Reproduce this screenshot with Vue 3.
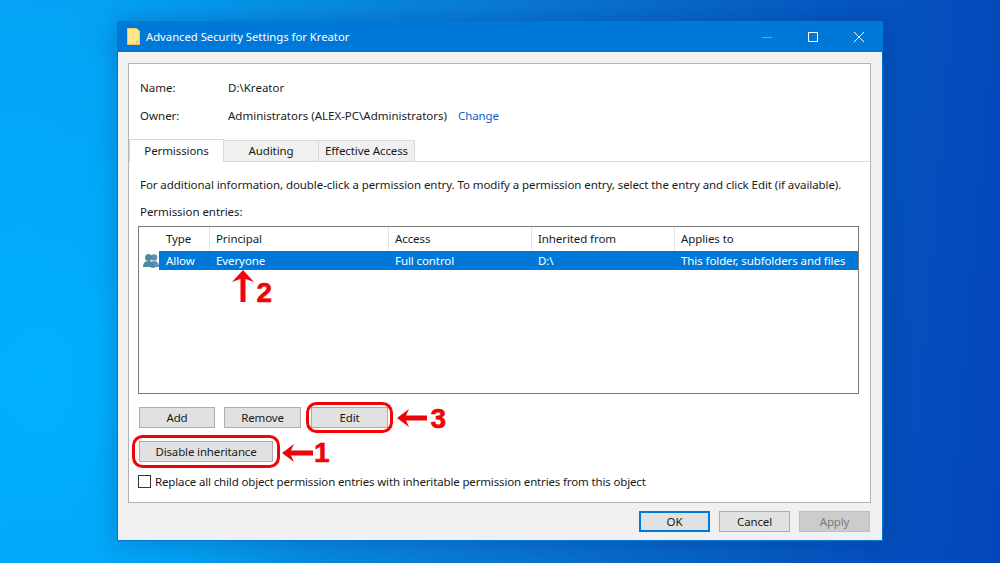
<script setup>
const cols = ['Type', 'Principal', 'Access', 'Inherited from', 'Applies to']
const row = ['Allow', 'Everyone', 'Full control', 'D:\\', 'This folder, subfolders and files']
const tabs = ['Permissions', 'Auditing', 'Effective Access']
</script>

<template>
  <div class="desktop">
    <div class="window">
      <header class="titlebar">
        <svg class="folder" width="13" height="17" viewBox="0 0 13 17">
          <path d="M.5.5h9l3 2.500v13.500H.5z" fill="#fde68e" stroke="#ecc860" stroke-width="1" />
          <path d="M9 16.500v-4h3.500" fill="#f2c65a" />
        </svg>
        <span class="title">Advanced Security Settings for Kreator</span>
        <div class="controls">
          <span class="ctl"><svg width="12" height="12" viewBox="0 0 12 12"><path d="M1 6.500h10" stroke="#5aa9e8" /></svg></span>
          <span class="ctl"><svg width="12" height="12" viewBox="0 0 12 12"><rect x="1.500" y="1.500" width="9" height="9" fill="none" stroke="#fff" /></svg></span>
          <span class="ctl"><svg width="12" height="12" viewBox="0 0 12 12"><path d="M1 1l10 10M11 1L1 11" stroke="#fff" /></svg></span>
        </div>
      </header>

      <div class="content">
        <section class="panel">
          <div class="info">
            <span class="lbl">Name:</span><span>D:\Kreator</span>
          </div>
          <div class="info owner">
            <span class="lbl">Owner:</span><span>Administrators (ALEX-PC\Administrators)</span><a class="link">Change</a>
          </div>

          <div class="tabs">
            <span v-for="(t, i) in tabs" :key="t" class="tab" :class="['tab' + i, { active: i === 0 }]">{{ t }}</span>
          </div>

          <div class="pane">
            <p class="hint">For additional information, double-click a permission entry. To modify a permission entry, select the entry and click Edit (if available).</p>
            <p class="entries">Permission entries:</p>

            <div class="list">
              <div class="grid head">
                <span class="iconcol"></span>
                <span v-for="c in cols" :key="c" class="cell hcell">{{ c }}</span>
              </div>
              <div class="grid rowline">
                <span class="iconcol">
                  <svg width="16" height="15" viewBox="0 0 16 15">
                    <circle cx="11" cy="4.500" r="3.300" fill="#5f8fc0" />
                    <path d="M6.500 14c0-4 1.500-6 4.500-6s5 2 5 6z" fill="#5f8fc0" />
                    <circle cx="5.500" cy="4.500" r="3.500" fill="#4a8ba0" />
                    <path d="M0 14c0-4 2-6 5.500-6s5.500 2 5.500 6z" fill="#4a8ba0" />
                    <path d="M8 14h4v1H8z" fill="#6fb36a" />
                  </svg>
                </span>
                <span v-for="c in row" :key="c" class="cell sel">{{ c }}</span>
              </div>
            </div>

            <div class="btnrow">
              <button class="btn add">Add</button>
              <button class="btn b77">Remove</button>
              <button class="btn b77 edit">Edit</button>
            </div>
            <button class="btn dis">Disable inheritance</button>
            <label class="check"><span class="box"></span>Replace all child object permission entries with inheritable permission entries from this object</label>
          </div>
        </section>

        <footer class="foot">
          <button class="btn fb ok">OK</button>
          <button class="btn fb">Cancel</button>
          <button class="btn fb off">Apply</button>
        </footer>
      </div>
    </div>

    <!-- annotations drawn over the screenshot -->
    <svg class="marks" width="1000" height="563" viewBox="0 0 1000 563">
      <g fill="none" stroke="#f00506" stroke-width="3">
        <rect x="307.500" y="403.500" width="84" height="28" rx="9" />
        <rect x="133.500" y="436.500" width="145" height="30" rx="9" />
      </g>
      <g fill="#f00506">
        <path d="M397 418l12-9-3 6.500h21v5h-21l3 6.500z" />
        <path d="M282 453l12-9-3 6.500h22v5h-22l3 6.500z" />
        <path d="M243 270l-11 12 8.500-3v23h5v-23l8.500 3z" />
      </g>
      <text x="430.500" y="428" class="num">3</text>
      <text x="314" y="462" class="num">1</text>
      <text x="256.500" y="302" class="num">2</text>
    </svg>
  </div>
</template>

<style>
html, body { margin: 0; padding: 0; overflow: hidden; }
</style>

<style scoped>
.desktop {
  position: relative;
  width: 1000px;
  height: 563px;
  overflow: hidden;
  box-sizing: border-box;
  padding: 21px 117px 22px;
  font-family: "Noto Sans", "Open Sans", sans-serif;
  font-size: 11.500px;
  color: #1a1a1a;
  background:
    radial-gradient(ellipse 300px 420px at 40px 380px, rgba(0, 178, 255, .9) 0%, rgba(0, 170, 250, 0) 100%),
    linear-gradient(95deg, #04a2f4 0%, #04a0f2 12%, #0a78d4 50%, #0450bd 88%, #0446bb 100%);
}
.window {
  width: 766px;
  height: 520px;
  box-sizing: border-box;
  background: #f0f0f0;
  border: 1px solid #0078d7;
  display: flex;
  flex-direction: column;
  box-shadow: 0 0 22px rgba(0, 20, 70, .25);
}
.titlebar {
  flex: 0 0 30px;
  background: #0078d7;
  color: #fff;
  display: flex;
  align-items: center;
  padding: 0 0 1px 9px;
  box-sizing: border-box;
  font-size: 11.250px;
}
.folder { margin-right: 6px; }
.title { flex: 1; padding-bottom: 1px; }
.controls { display: flex; }
.ctl {
  width: 46px;
  height: 29px;
  display: flex;
  align-items: center;
  justify-content: center;
}
.content {
  flex: 1;
  display: flex;
  flex-direction: column;
  padding: 11px 11px 0 10px;
}
.panel {
  height: 440px;
  box-sizing: border-box;
  background: #fff;
  border: 1px solid #b4b4b4;
  padding-top: 16px;
  display: flex;
  flex-direction: column;
}
.info {
  display: flex;
  height: 16px;
  line-height: 16px;
  padding-left: 11px;
  margin-bottom: 13px;
}
.owner { line-height: 14px; }
.lbl { width: 88px; }
.link { color: #0a5fd0; margin-left: 11px; letter-spacing: -.1px; }
.tabs {
  display: flex;
  height: 21px;
  margin-top: 2px;
  padding-left: 1px;
  border-bottom: 1px solid #d9d9d9;
  position: relative;
}
.tab {
  box-sizing: border-box;
  height: 21px;
  padding-bottom: 2px;
  background: #f0f0f0;
  border: 1px solid #d9d9d9;
  border-bottom: none;
  margin-left: -1px;
  display: flex;
  align-items: center;
  justify-content: center;
  letter-spacing: -.1px;
}
.tab.active {
  background: #fff;
  height: 23px;
  margin-top: -1px;
  padding-bottom: 1px;
  position: relative;
  z-index: 1;
}
.tab0 { width: 95px; }
.tab1 { width: 96px; }
.tab2 { width: 97px; }
.pane { padding: 0 10px 0 9px; flex: 1; }
.hint { margin: 15px 0 0 2px; height: 16px; line-height: 16px; white-space: nowrap; letter-spacing: -.075px; }
.entries { margin: 11px 0 0 2px; height: 16px; line-height: 16px; letter-spacing: -.05px; }
.list {
  margin-top: 6px;
  width: 721px;
  height: 168px;
  box-sizing: border-box;
  border: 1px solid #7a7a7a;
  background: #fff;
}
.grid {
  display: grid;
  grid-template-columns: 20px 51px 179px 143px 143px 1fr;
}
.head { height: 24px; }
.rowline { height: 19px; }
.iconcol { display: flex; align-items: center; padding-left: 4px; }
.cell { display: flex; align-items: center; padding-left: 6px; letter-spacing: -.09px; }
.cell:nth-child(2) { padding-left: 7px; }
.hcell { border-right: 1px solid #e5e5e5; padding-bottom: 2px; box-sizing: border-box; }
.hcell:last-child { border-right: none; }
.sel { background: #0078d7; color: #fff; }
.btn {
  font: inherit;
  color: #1a1a1a;
  box-sizing: border-box;
  background: #e1e1e1;
  border: 1px solid #adadad;
  padding: 0;
  height: 21px;
  display: block;
  letter-spacing: -.15px;
}
.btnrow { display: flex; gap: 9px; margin: 13px 0 0 1px; }
.add { width: 76px; }
.b77 { width: 77px; }
.edit { margin-left: 1px; }
.dis { width: 134px; margin: 13px 0 0 1px; }
.check {
  display: flex;
  align-items: center;
  height: 16px;
  margin-top: 11px;
  white-space: nowrap;
  letter-spacing: -.15px;
}
.box {
  width: 13px;
  height: 13px;
  box-sizing: border-box;
  border: 1px solid #333;
  background: #fff;
  margin-right: 4px;
}
.foot {
  display: flex;
  justify-content: flex-end;
  gap: 9px;
  margin-top: 8px;
  padding-right: 1px;
}
.fb { width: 71px; }
.ok { border: 2px solid #0078d7; }
.off { background: #ccc; border-color: #bfbfbf; color: #7a7a7a; }
.marks { position: absolute; left: 0; top: 0; }
.num { font: 700 28px "Liberation Sans", sans-serif; fill: #f00506; stroke: #f00506; stroke-width: .6px; }
</style>
